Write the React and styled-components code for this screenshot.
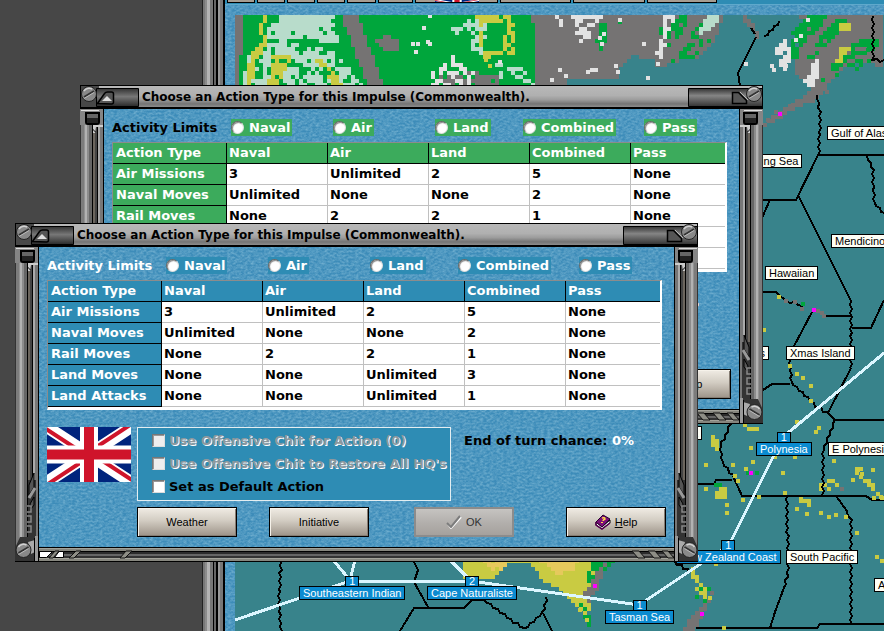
import React, { useId, useMemo } from "react";
import styled, { createGlobalStyle } from "styled-components";

const GlobalStyle = createGlobalStyle`
    * {
        box-sizing: border-box;
    }
    body {
        margin: 0;
        background: #474747;
        overflow: hidden;
    }
`;

const uiFont = "'Liberation Sans', Arial, sans-serif";
const boldFont = "'DejaVu Sans', Verdana, sans-serif";

// Grainy blue used behind every panel
const grain = `url("data:image/svg+xml,${encodeURIComponent(
    "<svg xmlns='http://www.w3.org/2000/svg' width='128' height='128'><filter id='n' x='0' y='0' width='100%' height='100%'><feTurbulence type='fractalNoise' baseFrequency='0.3 0.5' numOctaves='2' stitchTiles='stitch'/><feColorMatrix values='0 0 0 0 0.55  0 0 0 0 0.8  0 0 0 0 0.9  0 0.7 0 0 -0.22'/></filter><rect width='128' height='128' filter='url(#n)'/></svg>"
)}")`;

// ---------- Map data ----------

const ORIGIN = { x: 235, y: 15 };
const CELL = 4;

const GREY = "#757373";
const GREEN = "#00a63c";
const PALE = "#b8dccb";
const WHITE = "#e2e2e2";
const YELLOW = "#c9cb42";
const SAND = "#e6c95c";
const SEA = "#38838b";
const PINK = "#ff00ff";

// [colour, density, polygon]
const REGIONS = [
    [GREY, 1, [[235, 15], [724, 15], [716, 40], [694, 62], [676, 82], [640, 86], [235, 86]]],
    [SEA, 1, [[622, 66], [634, 54], [644, 60], [652, 58], [656, 68], [684, 60], [694, 60], [684, 86], [566, 86], [568, 80], [618, 78]]],
    [GREEN, 1, [[244, 15], [341, 15], [368, 86], [240, 86], [238, 70], [243, 46]]],
    [GREEN, 1, [[358, 15], [532, 15], [536, 50], [536, 86], [384, 86], [378, 68], [368, 44]]],
    [GREY, 1, [[376, 40], [388, 34], [400, 42], [398, 52], [384, 50]]],
    [GREY, 0.8, [[430, 78], [456, 86], [500, 86], [502, 76], [470, 72]]],
    [PALE, 0.92, [[284, 15], [334, 15], [338, 42], [300, 40], [278, 42], [266, 36], [270, 24]]],
    [PALE, 0.65, [[258, 44], [278, 42], [330, 50], [350, 64], [362, 86], [244, 86], [246, 60]]],
    [YELLOW, 1, [[262, 15], [266, 15], [264, 34], [268, 44], [256, 62], [252, 86], [246, 86], [250, 56], [262, 40], [260, 28]]],
    [YELLOW, 0.85, [[270, 56], [292, 56], [288, 66], [278, 86], [266, 86], [272, 72]]],
    [YELLOW, 0.85, [[314, 58], [322, 60], [334, 72], [344, 86], [332, 86], [326, 72]]],
    [PALE, 0.7, [[450, 30], [470, 20], [486, 20], [484, 60], [470, 52], [474, 26], [456, 38]]],
    [YELLOW, 0.85, [[474, 15], [512, 15], [516, 52], [508, 56], [484, 58], [484, 50], [504, 50], [506, 24], [484, 22], [482, 48], [476, 46], [482, 30]]],
    [WHITE, 0.5, [[432, 72], [452, 56], [474, 72], [472, 86], [432, 86]]],
    [PALE, 0.6, [[494, 64], [520, 66], [536, 86], [502, 80]]],
    [WHITE, 0.6, [[556, 15], [564, 15], [560, 30], [554, 28]]],
    [WHITE, 0.75, [[572, 15], [606, 15], [594, 26], [586, 44], [578, 42], [576, 28]]],
    [GREEN, 0.65, [[598, 24], [608, 18], [608, 40], [600, 54], [596, 44]]],
    [GREEN, 0.75, [[656, 30], [682, 15], [690, 18], [672, 50], [664, 46]]],
    [WHITE, 0.85, [[664, 15], [676, 15], [666, 40], [664, 58], [652, 56], [660, 40]]],
    [GREEN, 0.7, [[672, 62], [684, 46], [714, 36], [708, 46], [692, 58]]],
    [GREEN, 0.75, [[688, 34], [706, 18], [716, 22], [696, 40]]],
    [PALE, 0.85, [[702, 24], [706, 15], [722, 15], [710, 30], [700, 34]]],
    [GREY, 1, [[800, 15], [884, 15], [884, 66], [850, 62], [832, 80], [820, 98], [794, 110], [764, 128], [764, 122], [800, 98], [812, 88], [796, 76], [794, 50], [808, 36]]],
    [GREY, 0.9, [[740, 15], [752, 18], [754, 28], [762, 34], [756, 38]]],
    [GREEN, 0.85, [[792, 32], [806, 15], [830, 15], [806, 42], [796, 60], [788, 58]]],
    [GREEN, 0.7, [[818, 40], [838, 18], [850, 22], [828, 44], [812, 62], [808, 58]]],
    [GREEN, 0.75, [[830, 66], [852, 42], [884, 38], [876, 50], [850, 58], [834, 76]]],
    [GREEN, 0.6, [[844, 66], [862, 58], [884, 64], [860, 70]]],
    [YELLOW, 0.8, [[836, 64], [842, 46], [850, 48], [840, 66]]],
    [YELLOW, 1, [[840, 24], [850, 23], [850, 29], [840, 31]]],
    [WHITE, 0.95, [[776, 48], [786, 40], [792, 56], [786, 70], [780, 66], [782, 56], [774, 54]]],
    [WHITE, 0.9, [[812, 62], [820, 60], [816, 86], [808, 86], [802, 78], [810, 76]]],
    [YELLOW, 1, [[462, 560], [604, 560], [592, 600], [588, 616], [578, 610], [560, 588], [546, 584], [540, 576], [528, 562], [506, 564], [496, 578], [478, 580], [462, 580]]],
    [SAND, 0.95, [[484, 560], [508, 560], [504, 572], [490, 570]]],
    [SAND, 0.95, [[536, 560], [580, 560], [572, 572], [554, 574], [550, 566]]],
    [GREEN, 0.7, [[592, 560], [614, 560], [600, 578], [588, 592], [586, 586]]],
    [GREY, 1, [[598, 570], [606, 562], [598, 590], [586, 606], [584, 594]]],
    [GREEN, 0.8, [[580, 602], [592, 608], [592, 631], [584, 628]]],
    [GREY, 1, [[716, 592], [708, 604], [694, 631], [682, 631], [696, 610]]],
    [YELLOW, 0.9, [[692, 566], [700, 582], [710, 592], [706, 600], [694, 590]]],
    [GREEN, 0.5, [[700, 586], [712, 588], [706, 604], [694, 600]]],
    [YELLOW, 0.8, [[706, 432], [716, 436], [722, 452], [714, 448]]],
    [YELLOW, 0.8, [[714, 490], [730, 486], [728, 500], [716, 500]]],
    [YELLOW, 0.7, [[740, 424], [758, 424], [760, 432], [744, 430]]],
    [YELLOW, 0.75, [[820, 478], [836, 480], [842, 488], [820, 490]]],
    [YELLOW, 0.45, [[850, 466], [868, 470], [884, 492], [884, 500], [864, 488]]],
    [YELLOW, 0.7, [[798, 496], [812, 500], [808, 508], [800, 504]]],
];

const SPOTS = [
    [YELLOW, [[779, 297], [764, 330], [790, 366], [797, 374], [803, 378], [811, 386], [706, 465], [733, 465], [751, 448], [735, 476], [738, 481],
        [775, 457], [795, 457], [783, 473], [753, 462], [746, 469], [727, 505], [727, 513], [706, 489], [743, 500], [759, 497], [785, 493],
        [834, 461], [873, 470], [853, 480], [797, 509], [807, 514], [821, 513], [829, 517], [836, 515], [846, 517], [857, 533], [877, 557],
        [882, 561], [816, 432], [819, 428], [811, 401], [797, 422], [716, 564], [710, 598], [724, 628], [580, 610], [587, 620], [486, 60], [490, 66],
        [858, 470], [862, 474], [878, 494], [882, 498], [874, 498]]],
    [GREEN, [[803, 304], [748, 473], [757, 473], [716, 485], [720, 485], [868, 50], [823, 80], [837, 75], [620, 22]]],
    [GREY, [[786, 301], [795, 302], [802, 309], [818, 311], [822, 313], [824, 316], [842, 489], [712, 593], [776, 112], [768, 120], [790, 106], [827, 92]]],
    [PINK, [[780, 114], [814, 310], [751, 473], [595, 586], [702, 614]]],
    [WHITE, [[746, 64], [772, 66], [774, 70], [786, 66], [808, 20], [796, 40], [801, 36], [413, 44], [418, 44], [416, 52], [428, 42], [430, 44], [424, 28], [430, 16],
        [552, 80], [560, 70], [566, 76], [600, 38], [602, 44], [604, 34], [588, 72], [592, 70], [596, 70], [616, 66], [618, 72], [648, 78], [644, 44], [658, 64], [620, 20], [500, 62]]],
];

// [points, jagged]
const BORDERS = [
    [[[756, 37], [738, 73], [740, 86]], false],
    [[[751, 28], [755, 34]], false],
    [[[764, 36], [770, 32], [780, 22]], true],
    [[[873, 16], [873, 60], [884, 61]], true],
    [[[817, 95], [820, 112], [819, 155]], true],
    [[[884, 155], [818, 155], [796, 200], [760, 200]], false],
    [[[798, 195], [851, 301]], false],
    [[[867, 156], [873, 170], [874, 203], [884, 214]], true],
    [[[770, 200], [760, 222]], false],
    [[[851, 301], [851, 368]], true],
    [[[851, 368], [828, 413]], false],
    [[[760, 292], [776, 292], [786, 301]], false],
    [[[786, 301], [798, 304], [804, 309]], true],
    [[[824, 316], [851, 316]], false],
    [[[852, 328], [871, 328], [884, 300]], false],
    [[[812, 312], [793, 348]], false],
    [[[790, 360], [791, 382], [816, 406], [828, 413]], true],
    [[[760, 392], [772, 384], [790, 384]], false],
    [[[828, 413], [835, 420], [884, 420]], false],
    [[[835, 420], [823, 450], [823, 495]], true],
    [[[731, 424], [720, 446], [722, 462], [733, 476]], true],
    [[[733, 476], [742, 496], [836, 496], [847, 511]], false],
    [[[847, 511], [851, 520], [851, 624]], true],
    [[[836, 496], [866, 496], [872, 500], [884, 500]], false],
    [[[787, 496], [788, 572], [785, 585]], true],
    [[[785, 585], [775, 612], [770, 628]], false],
    [[[696, 628], [817, 628], [820, 624], [884, 624]], false],
    [[[698, 484], [714, 484], [716, 480], [732, 480]], false],
    [[[675, 562], [690, 572]], true],
    [[[414, 562], [418, 570], [414, 582], [428, 607]], false],
    [[[400, 631], [414, 608], [464, 608], [472, 600], [484, 600]], false],
    [[[484, 600], [524, 629], [543, 613], [547, 597]], true],
    [[[543, 613], [552, 631]], false],
    [[[281, 562], [279, 600], [281, 631]], true],
];

const ROUTES = [
    "884,353 783,437 729,545 639,605 471,581 350,581 235,620",
    "333,560 350,580 355,560",
    "450,560 471,581",
];

const PINS = [
    { name: "Gulf of Alaska", x: 827, y: 126 },
    { name: "Bering Sea", x: 740, y: 154 },
    { name: "Mendicino", x: 831, y: 234 },
    { name: "Hawaiian", x: 765, y: 266 },
    { name: "Xmas Island", x: 786, y: 346 },
    { name: "Marshalls", x: 714, y: 346 },
    { name: "E Polynesia", x: 828, y: 442 },
    { name: "South Pacific", x: 786, y: 550 },
    { name: "Austral", x: 874, y: 578 },
    { name: "Coral Sea", x: 645, y: 426 },
    { name: "Polynesia", x: 756, y: 432, count: 1 },
    { name: "New Zealand Coast", x: 676, y: 540, count: 1 },
    { name: "Tasman Sea", x: 605, y: 600, count: 1 },
    { name: "Southeastern Indian", x: 299, y: 576, count: 1 },
    { name: "Cape Naturaliste", x: 427, y: 576, count: 2 },
];

const inside = (px, py, poly) => {
    let hit = false;
    for (let i = 0, j = poly.length - 1; i < poly.length; j = i++) {
        const [xi, yi] = poly[i];
        const [xj, yj] = poly[j];
        if (yi > py !== yj > py && px < ((xj - xi) * (py - yi)) / (yj - yi) + xi) hit = !hit;
    }
    return hit;
};

const noise = (x, y) => {
    const n = Math.sin(x * 12.9898 + y * 78.233) * 43758.5453;
    return n - Math.floor(n);
};

// Turns a region into one path of square cells
const cellsOf = (poly, density) => {
    const xs = poly.map((p) => p[0]);
    const ys = poly.map((p) => p[1]);
    const startX = ORIGIN.x + Math.floor((Math.min(...xs) - ORIGIN.x) / CELL) * CELL;
    const startY = ORIGIN.y + Math.floor((Math.min(...ys) - ORIGIN.y) / CELL) * CELL;
    let d = "";
    for (let y = startY; y < Math.max(...ys); y += CELL) {
        for (let x = startX; x < Math.max(...xs); x += CELL) {
            if (inside(x + 2, y + 2, poly) && noise(x, y) < density) d += `M${x} ${y}h4v4h-4z`;
        }
    }
    return d;
};

const jag = (points) => {
    const out = [points[0]];
    let side = 1;
    for (let i = 1; i < points.length; i++) {
        const [ax, ay] = points[i - 1];
        const [bx, by] = points[i];
        const len = Math.hypot(bx - ax, by - ay);
        const steps = Math.max(1, Math.round(len / 4));
        for (let s = 1; s <= steps; s++) {
            side = -side;
            const k = s / steps;
            out.push([
                Math.round(ax + (bx - ax) * k + (side * (by - ay)) / len),
                Math.round(ay + (by - ay) * k - (side * (bx - ax)) / len),
            ]);
        }
    }
    return out;
};

// ---------- Map window ----------

const Desktop = styled.main`
    position: relative;
    min-height: 100vh;
    display: flex;
    padding-left: 202px;
    background: #474747;
    overflow: hidden;
`;

const MapFrame = styled.div`
    flex: none;
    width: 23px;
    background: linear-gradient(
        to right,
        #222 0 1px, #777 1px 3px, #8c8c8c 3px 5px, #b4b4b4 5px 8px, #777 8px 11px,
        #000 11px 12px, #666 12px 14px, #000 14px 16px, #999 16px 18px, #777 18px 21px, #000 21px 23px
    );
`;

const MapWindow = styled.section`
    flex: 1;
    min-width: 0;
    display: flex;
    flex-direction: column;
    background: ${grain}, #3d8cb9;
`;

const Toolbar = styled.div`
    display: flex;
    gap: 2px;
    height: 5px;
    padding-left: 2px;
    border-bottom: 1px solid #5fa9cc;
    background: #2e8cb4;
`;

const ToolSlot = styled.span`
    flex: none;
    width: ${(props) => props.$width}px;
    height: 3px;
    overflow: hidden;
    background: #a69d92;
    border: 1px solid #000;
    border-top: none;
    text-align: center;
    line-height: 0;
`;

const MapView = styled.div`
    position: relative;
    flex: 1;
    margin: 10px 0 0 10px;
    background: ${SEA};
    overflow: hidden;
`;

const Terrain = styled.svg`
    position: absolute;
    inset: 0;
    width: 100%;
    height: 100%;
`;

const Pin = styled.div`
    position: absolute;
    left: ${(props) => props.$x - ORIGIN.x}px;
    top: ${(props) => props.$y - ORIGIN.y}px;
    display: flex;
    flex-direction: column;
    align-items: center;
    font: 11px/12px ${uiFont};
    white-space: nowrap;
`;

const PinName = styled.span`
    padding: 0 3px;
    border: 1px solid #000;
    background: ${(props) => (props.$active ? "#0b8bd0" : "#fffff6")};
    color: ${(props) => (props.$active ? "#fff" : "#000")};
`;

const PinCount = styled.span`
    width: 14px;
    height: 10px;
    border: 1px solid #000;
    border-bottom: none;
    background: #0b8bd0;
    color: #fff;
    line-height: 9px;
    text-align: center;
`;

const UnionJack = ({ width, height }) => (
    <svg width={width} height={height} viewBox="0 0 84 55" preserveAspectRatio="none" role="img" aria-label="Commonwealth flag">
        <path fill="#00247d" d="M0 0h84v55H0z" />
        <path stroke="#fff" strokeWidth="12" d="M0 0l84 55M84 0L0 55" />
        <path stroke="#cf142b" strokeWidth="4" d="M-1 2l43 28M85 53L42 25M83 -2L42 25M1 57l41-27" />
        <path stroke="#fff" strokeWidth="18" d="M42 0v55M0 27.5h84" />
        <path stroke="#cf142b" strokeWidth="10" d="M42 0v55M0 27.5h84" />
    </svg>
);

const WorldMap = () => {
    const regions = useMemo(() => REGIONS.map(([fill, density, poly]) => ({ fill, d: cellsOf(poly, density) })), []);

    return (
        <MapView>
            <Terrain aria-hidden="true">
                <g transform={`translate(${-ORIGIN.x} ${-ORIGIN.y})`} shapeRendering="crispEdges">
                    {regions.map((region, i) => (
                        <path key={i} fill={region.fill} d={region.d} />
                    ))}
                    {BORDERS.map(([points, jagged], i) => (
                        <polyline key={i} fill="none" stroke="#000" strokeWidth="2" points={(jagged ? jag(points) : points).join(" ")} />
                    ))}
                    {SPOTS.map(([fill, spots]) => (
                        <path key={fill} fill={fill} d={spots.map(([x, y]) => `M${x - 2} ${y - 2}h4v4h-4z`).join("")} />
                    ))}
                    {ROUTES.map((points) => (
                        <polyline key={points} fill="none" stroke="#dcf6ff" strokeWidth="3" points={points} />
                    ))}
                </g>
            </Terrain>
            {PINS.map((pin) => (
                <Pin key={pin.name} $x={pin.x} $y={pin.y}>
                    {pin.count && <PinCount>{pin.count}</PinCount>}
                    <PinName $active={Boolean(pin.count)}>{pin.name}</PinName>
                </Pin>
            ))}
        </MapView>
    );
};

// ---------- Dialog ----------

const Dialog = styled.section`
    position: absolute;
    left: ${(props) => props.$x}px;
    top: ${(props) => props.$y}px;
    display: grid;
    grid-template-columns: 24px auto 24px;
    grid-template-rows: 24px auto 15px;
    font-family: ${boldFont};
`;

const TitleBar = styled.header`
    grid-row: 1;
    grid-column: 1 / 4;
    display: flex;
    align-items: center;
    justify-content: space-between;
    border: 1px solid #000;
    border-width: 1px 1px 2px;
    background: linear-gradient(#b8b8b8, #b0b0b0 45%, #9c9c9c 65%, #747474 85%, #8c8c8c);
`;

const Title = styled.h1`
    flex: 1;
    margin: 0;
    padding-left: 3px;
    font-size: 12px;
    line-height: 20px;
    font-weight: bold;
    color: #000;
`;

const Side = styled.div`
    grid-row: 2 / 4;
    grid-column: ${(props) => (props.$right ? 3 : 1)};
    display: flex;
    flex-direction: column;
    justify-content: space-between;
    background: linear-gradient(
        ${(props) => (props.$right ? "to left" : "to right")},
        #333 0 1px, #7c7c7c 1px 4px, #929292 4px 5px, #b2b2b2 5px 7px, #8c8c8c 7px 9px, #666 9px 12px,
        #000 12px 13px, #6c665e 13px 15px, #444 15px 17px, #000 17px 18px, #aaa 18px 20px, #777 20px 23px, #000 23px 24px
    );
    svg {
        display: block;
        transform: ${(props) => (props.$right ? "scaleX(-1)" : "none")};
    }
`;

const BottomBar = styled.div`
    grid-row: 3;
    grid-column: 2;
    display: flex;
    justify-content: space-between;
    background: linear-gradient(
        #000 0 1px, #a3a39a 1px 2px, #86867e 2px 4px, #000 4px 5px, #2c2c2c 5px 7px,
        #666 7px 9px, #333 9px 11px, #a3a39a 11px 12px, #86867e 12px 14px, #000 14px 15px
    );
    svg {
        display: block;
    }
`;

const Content = styled.form`
    grid-row: 2;
    grid-column: 2;
    padding: 10px 8px;
    background: ${grain}, #3d8cb9;
`;

const Limits = styled.fieldset`
    display: grid;
    grid-template-columns: 119px 102px 102px 88px 121px auto;
    align-items: center;
    justify-items: start;
    margin: 0 0 6px;
    padding: 0;
    border: none;
    font-size: 13px;
    line-height: 17px;
    font-weight: bold;
    color: #fff;
`;

const LimitsTitle = styled.span`
    color: ${(props) => props.$color};
`;

const RadioLabel = styled.label`
    display: flex;
    align-items: center;
    gap: 5px;
    padding-right: 2px;
    background: ${(props) => props.$accent};
`;

const Radio = styled.input`
    appearance: none;
    width: 13px;
    height: 13px;
    margin: 0;
    border: 1px solid;
    border-color: #666 #ddd #ddd #666;
    border-radius: 50%;
    background: #fff;
    box-shadow: inset 1px 1px 1px #888;
    &:checked {
        background: radial-gradient(#000 0 2px, #fff 3px);
    }
`;

const Table = styled.table`
    table-layout: fixed;
    width: 615px;
    border-collapse: separate;
    border-spacing: 0;
    border: 1px solid #8c8c8c;
    border-width: 1px 2px 3px 1px;
    border-color: #8c8c8c #fff #fff #8c8c8c;
    background: #fff;
    font-size: 13px;
    line-height: 20px;
    color: #000;
`;

const cell = `
    height: 21px;
    padding: 0 0 0 2px;
    text-align: left;
    font-weight: bold;
    white-space: nowrap;
`;

const HeadCell = styled.th`
    ${cell}
    width: ${(props) => props.$width}px;
    border-right: 1px solid #000;
    border-bottom: 1px solid #000;
    background: ${(props) => props.$accent};
    color: #fff;
    &:first-child {
        padding-left: 3px;
    }
    &:last-child {
        border-right: none;
    }
`;

const Cell = styled.td`
    ${cell}
    border-right: 1px solid #c0c0c0;
    border-bottom: 1px solid #c0c0c0;
    &:last-child {
        border-right: none;
    }
`;

const Options = styled.div`
    display: flex;
    align-items: flex-start;
    margin-top: 17px;
    > svg {
        flex: none;
        margin-right: 6px;
    }
`;

const OptionBox = styled.fieldset`
    flex: none;
    width: 314px;
    height: 74px;
    display: flex;
    flex-direction: column;
    justify-content: center;
    margin: 0 13px 0 0;
    padding: 0 0 2px 14px;
    border: 1px solid #e4eef2;
    background: #2e8cb4;
`;

const OptionLabel = styled.label`
    display: flex;
    align-items: center;
    gap: 4px;
    font-size: 13px;
    line-height: 23px;
    font-weight: bold;
    white-space: nowrap;
    color: ${(props) => (props.$disabled ? "#8d989e" : "#000")};
    text-shadow: ${(props) => (props.$disabled ? "1px 1px 0 #fff" : "none")};
`;

const Checkbox = styled.input`
    appearance: none;
    width: 13px;
    height: 13px;
    margin: 0;
    border: 1px solid;
    border-color: #777 #ddd #ddd #777;
    background: #fff;
    box-shadow: inset 1px 1px 0 #999;
    &:disabled {
        background: #eee;
    }
    &:checked {
        background: #333;
    }
`;

const Chance = styled.p`
    margin: 5px 0 0;
    font-size: 13px;
    line-height: 18px;
    font-weight: bold;
    color: #000;
`;

const ChanceValue = styled.output`
    color: #fff;
`;

const Actions = styled.div`
    display: grid;
    grid-template-columns: 132px 145px 152px 100px;
    margin: 6px 0 0 90px;
`;

const Button = styled.button`
    display: flex;
    align-items: center;
    justify-content: center;
    gap: 4px;
    width: 100px;
    height: 30px;
    padding: 0;
    border: 1px solid #000;
    background: linear-gradient(#f0ece4, #d2ccc2 45%, #9c9388);
    box-shadow: inset 1px 1px 0 #f6f2ea, inset -1px -1px 0 #857c72;
    font: 11px ${uiFont};
    color: #000;
    &:disabled {
        border: 2px solid #8c8c8c;
        background: linear-gradient(#c6c4c1, #b3b0ad 50%, #a5a19d);
        box-shadow: none;
        color: #333;
    }
`;

const ScrewHead = ({ cx, cy }) => (
    <g>
        <circle cx={cx} cy={cy} r="7.5" fill="#898989" stroke="#222" />
        <path d={`M${cx - 5} ${cy - 3}a6 6 0 0 1 8 -2`} fill="none" stroke="#d2d2d2" strokeWidth="1.5" />
        <path d={`M${cx - 5} ${cy + 3}l10 -6`} stroke="#333" strokeWidth="2" />
        <path d={`M${cx - 5} ${cy + 4.5}l10 -6`} stroke="#bbb" strokeWidth="1" />
    </g>
);

const LeftCap = () => {
    const fill = useId();
    return (
        <svg width="58" height="21" viewBox="0 0 58 21" aria-hidden="true">
            <linearGradient id={fill} x2="0" y2="1">
                <stop stopColor="#333" />
                <stop offset=".45" stopColor="#777" />
                <stop offset="1" stopColor="#292929" />
            </linearGradient>
            <path fill="#484848" d="M0 0h18v21H0z" />
            <path fill={`url(#${fill})`} stroke="#000" d="M15.5 2.5h42v18h-42z" />
            <path d="M16.5 17.5l7-10q1-1.500 3-1.500h4q2 0 2 2v8q0 2-2 2z" fill="#555" stroke="#000" strokeWidth="1.5" />
            <path d="M21 15l5-5 5 5z" fill="#ddd" />
            <ScrewHead cx={8} cy={8} />
        </svg>
    );
};

const RightCap = () => {
    const fill = useId();
    return (
        <svg width="74" height="21" viewBox="0 0 74 21" aria-hidden="true">
            <linearGradient id={fill} x2="0" y2="1">
                <stop stopColor="#333" />
                <stop offset=".4" stopColor="#858585" />
                <stop offset="1" stopColor="#333" />
            </linearGradient>
            <path fill={`url(#${fill})`} stroke="#000" d="M.5 2.5H76v18H.5z" />
            <path d="M44.5 6.5h6l8 8v3h-14z" fill="#555" stroke="#000" strokeWidth="1.5" />
            <path d="M52 6l8 8" stroke="#bbb" />
            <ScrewHead cx={66} cy={8} />
        </svg>
    );
};

const SideCap = () => (
    <svg width="24" height="24" viewBox="0 0 24 24" aria-hidden="true">
        <path fill="#858585" d="M0 0h23v16H0z" />
        <path fill="#ddd" d="M1 1h18v1H1z" />
        <path fill="#666" stroke="#000" strokeWidth="2" d="M6 4h13v9q0 2-2 2H8q-2 0-2-2z" />
        <path fill="#222" d="M7 9h11v5H7z" />
        <path fill="#ccc" d="M13 16h10v2h-7l-1 6h-2z" />
        <path fill="none" stroke="#000" d="M12.5 16v4l3 3M23.5 0v24" />
    </svg>
);

const SideFoot = () => (
    <svg width="24" height="92" viewBox="0 0 24 92" aria-hidden="true">
        <path fill="#333" d="M13 10h8v60h-8z" />
        <path d="M14 15l5-12v14l-5 8zM15 34l4-7v8l-3 4z" fill="#555" stroke="#000" />
        <path d="M14 28l6-10" stroke="#999" strokeWidth="3" />
        <path d="M12 36h4v6h-4m0 4h4v6h-4m0 4h4v6h-4" fill="none" stroke="#888" strokeWidth="1.5" />
        <path fill="#343434" d="M5 67h15v25H0V78z" />
        <path fill="#aaa" d="M13 72l7-2v12l-4 2z" />
        <path fill="#999" d="M20 66h3v25h-3z" />
        <ScrewHead cx={8.5} cy={80} />
        <path d="M19.5 68v24M0 91.5h24M23.5 0v77" stroke="#000" />
    </svg>
);

const BottomLeftTrim = () => (
    <svg width="95" height="15" viewBox="0 0 95 15" aria-hidden="true">
        <path fill="#fff" stroke="#000" d="M.5 4.5h13l-6 6h-7zM20 4.5h4.500v6h-9z" />
        <path fill="#8e8e86" stroke="#111" d="M16 4h4l-6 7h-4zM37 4h5l-7 7h-5zM87 4h6l-7 7h-5z" />
    </svg>
);

const BottomRightTrim = () => (
    <svg width="46" height="15" viewBox="0 0 46 15" aria-hidden="true">
        <path fill="#8e8e86" stroke="#111" d="M4 4h7l6 7h-7zM20 4h7l6 7h-7zM34 4h6l6 7h-6z" />
    </svg>
);

const CheckIcon = () => (
    <svg width="16" height="14" viewBox="0 0 16 14" aria-hidden="true">
        <path d="M2 9l3 4L15 2" fill="none" stroke="#fff" strokeWidth="2" />
        <path d="M1 8l4 4L14 1" fill="none" stroke="#7c7c7c" strokeWidth="2" />
    </svg>
);

const BookIcon = () => (
    <svg width="16" height="16" viewBox="0 0 16 16" aria-hidden="true">
        <path d="M1 8l6 5 8-7v3l-8 6-6-4z" fill="#fff" stroke="#000" />
        <path d="M1 8l7-7 7 4-8 8z" fill="#7b1079" stroke="#24002c" />
        <path d="M1 8v3l6 4 8-6" fill="none" stroke="#56004f" strokeWidth="1.5" />
        <path d="M7 4q3-1 3 1-2 1-2 2" fill="none" stroke="#ffd84a" strokeWidth="1.5" />
        <path d="M6 8h2v1H6z" fill="#ffd84a" />
    </svg>
);

const ACTIONS = ["Naval", "Air", "Land", "Combined", "Pass"];

const LIMITS = [
    ["Air Missions", "3", "Unlimited", "2", "5", "None"],
    ["Naval Moves", "Unlimited", "None", "None", "2", "None"],
    ["Rail Moves", "None", "2", "2", "1", "None"],
    ["Land Moves", "None", "None", "Unlimited", "3", "None"],
    ["Land Attacks", "None", "None", "Unlimited", "1", "None"],
];

const COLUMN_WIDTHS = [114, 101, 101, 101, 101, 94];

const ActionDialog = ({ x, y, accent, labelColor }) => {
    const group = useId();

    return (
        <Dialog $x={x} $y={y} role="dialog" aria-labelledby={`${group}-title`}>
            <TitleBar>
                <LeftCap />
                <Title id={`${group}-title`}>Choose an Action Type for this Impulse (Commonwealth).</Title>
                <RightCap />
            </TitleBar>
            <Side>
                <SideCap />
                <SideFoot />
            </Side>
            <Content onSubmit={(e) => e.preventDefault()}>
                <Limits aria-label="Activity Limits">
                    <LimitsTitle $color={labelColor}>Activity Limits</LimitsTitle>
                    {ACTIONS.map((action) => (
                        <RadioLabel key={action} $accent={accent}>
                            <Radio type="radio" name={group} value={action} />
                            {action}
                        </RadioLabel>
                    ))}
                </Limits>
                <Table>
                    <thead>
                        <tr>
                            {["Action Type", ...ACTIONS].map((name, i) => (
                                <HeadCell key={name} scope="col" $accent={accent} $width={COLUMN_WIDTHS[i]}>{name}</HeadCell>
                            ))}
                        </tr>
                    </thead>
                    <tbody>
                        {LIMITS.map(([name, ...values]) => (
                            <tr key={name}>
                                <HeadCell scope="row" $accent={accent}>{name}</HeadCell>
                                {values.map((value, i) => (
                                    <Cell key={ACTIONS[i]}>{value}</Cell>
                                ))}
                            </tr>
                        ))}
                    </tbody>
                </Table>
                <Options>
                    <UnionJack width={84} height={55} />
                    <OptionBox aria-label="Options">
                        <OptionLabel $disabled>
                            <Checkbox type="checkbox" disabled />
                            Use Offensive Chit for Action (0)
                        </OptionLabel>
                        <OptionLabel $disabled>
                            <Checkbox type="checkbox" disabled />
                            Use Offensive Chit to Restore All HQ's
                        </OptionLabel>
                        <OptionLabel>
                            <Checkbox type="checkbox" />
                            Set as Default Action
                        </OptionLabel>
                    </OptionBox>
                    <Chance>
                        End of turn chance: <ChanceValue>0%</ChanceValue>
                    </Chance>
                </Options>
                <Actions>
                    <Button type="button">Weather</Button>
                    <Button type="button">Initiative</Button>
                    <Button type="submit" disabled>
                        <CheckIcon />
                        OK
                    </Button>
                    <Button type="button">
                        <BookIcon />
                        <span><u>H</u>elp</span>
                    </Button>
                </Actions>
            </Content>
            <Side $right>
                <SideCap />
                <SideFoot />
            </Side>
            <BottomBar>
                <BottomLeftTrim />
                <BottomRightTrim />
            </BottomBar>
        </Dialog>
    );
};

const App = () => (
    <>
        <GlobalStyle />
        <Desktop>
            <MapFrame />
            <MapWindow>
                <Toolbar>
                    {[28, 28, 28, 28, 29, 35, 83, 71, 72, 70].map((width, i) => (
                        <ToolSlot key={i} $width={width}>
                            {i === 6 && <UnionJack width={44} height={8} />}
                        </ToolSlot>
                    ))}
                </Toolbar>
                <WorldMap />
            </MapWindow>
            <ActionDialog x={80} y={85} accent="#3cab5c" labelColor="#000" />
            <ActionDialog x={15} y={223} accent="#2e8cb4" labelColor="#fff" />
        </Desktop>
    </>
);

export default App;
